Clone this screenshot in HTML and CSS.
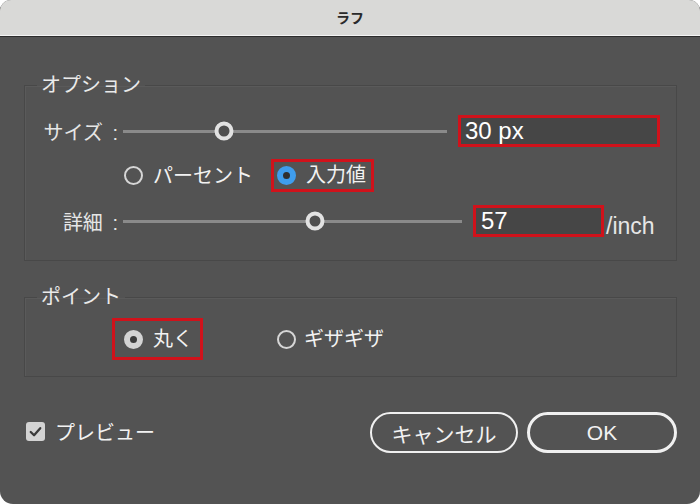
FILE: index.html
```html
<!DOCTYPE html>
<html lang="ja">
<head>
  <meta charset="UTF-8" />
  <meta name="viewport" content="width=device-width, initial-scale=1.0"/>
  <title>ラフ</title>
  <link rel="stylesheet" href="styles.css">
</head>
<body>
  <div class="dialog">
    <div class="titlebar">ラフ</div>

    <div class="panel">
      <fieldset class="group group-options">
        <legend>オプション</legend>

        <div class="slider-row">
          <span class="label">サイズ :</span>
          <div class="track track-size"><span class="thumb" style="left: 31.2%"></span></div>
          <div class="field field-size mark">30 px</div>
        </div>

        <div class="radio-row row-unit">
          <label class="radio"><span class="dot"></span>パーセント</label>
          <label class="radio mark mark-unit"><span class="dot dot-blue"></span>入力値</label>
        </div>

        <div class="slider-row row-detail">
          <span class="label">詳細 :</span>
          <div class="track track-detail"><span class="thumb" style="left: 56.6%"></span></div>
          <div class="field field-detail mark">57</div>
          <span class="unit">/inch</span>
        </div>
      </fieldset>

      <fieldset class="group group-points">
        <legend>ポイント</legend>
        <div class="radio-row row-points">
          <label class="radio mark mark-round"><span class="dot dot-gray"></span>丸く</label>
          <label class="radio radio-jag"><span class="dot"></span>ギザギザ</label>
        </div>
      </fieldset>

      <div class="footer">
        <label class="check">
          <span class="box">
            <svg viewBox="0 0 20 20"><path d="M5 10.5 8.5 14 15 6.5" /></svg>
          </span>
          プレビュー
        </label>
        <div class="buttons">
          <button class="btn">キャンセル</button>
          <button class="btn btn-ok">OK</button>
        </div>
      </div>
    </div>
  </div>
</body>
</html>
```

FILE: styles.css
```css
* {
  box-sizing: border-box;
}
body {
  margin: 0;
  background: #fff;
  font-family: 'Liberation Sans', 'Noto Sans CJK JP', sans-serif;
  color: #f2f2f2;
}
.dialog {
  width: 700px;
  height: 504px;
  background: #535353;
  border-radius: 11px 11px 13px 13px;
  overflow: hidden;
}
.titlebar {
  height: 36px;
  background: #d9d9d7;
  border-bottom: 1px solid #f4f4f4;
  box-shadow: 0 1px 0 #2c2c2c;
  display: flex;
  align-items: center;
  justify-content: center;
  font-size: 14px;
  font-weight: bold;
  color: #2a2a2a;
  padding-bottom: 1px;
}
.panel {
  padding: 0 23px 0 24px;
}
.group {
  margin: 0;
  padding: 0;
  border: 1px solid #484848;
  box-shadow: inset 1px 1px 0 #5a5a5a;
}
.group legend {
  margin-left: 12px;
  padding: 0 4px 0 4px;
  font-size: 20px;
  line-height: 24px;
  color: #eaeaea;
}
.group-options {
  margin-top: 37px;
  padding: 18px 0 23px;
}
.group-points {
  margin-top: 24px;
  padding: 9px 0 16px;
}

/* slider rows */
.slider-row {
  display: flex;
  align-items: center;
  height: 32px;
}
.row-detail {
  margin-top: 13px;
}
.label {
  width: 93px;
  text-align: right;
  font-size: 20px;
  word-spacing: 4px;
  color: #e6e6e6;
  white-space: nowrap;
}
.track {
  position: relative;
  height: 3px;
  margin-left: 5px;
  background: #8a8a8a;
}
.track-size { width: 324px; }
.track-detail { width: 339px; }
.thumb {
  position: absolute;
  top: 50%;
  width: 19px;
  height: 19px;
  border: 4px solid #e2e2e2;
  border-radius: 50%;
  background: #4f4f4f;
  transform: translate(-50%, -50%);
}
.field {
  height: 32px;
  margin-left: 11px;
  background: #464646;
  font-size: 24px;
  line-height: 26px;
  color: #fff;
}
.field-size {
  width: 202px;
  padding-left: 4px;
}
.field-detail {
  width: 131px;
  padding-left: 5px;
}
.unit {
  margin-left: 2px;
  margin-top: 10px;
  font-size: 23px;
  color: #e6e6e6;
}
.mark {
  border: 3px solid #d0121b;
}

/* radios */
.radio-row {
  display: flex;
  align-items: center;
}
.row-unit {
  margin-top: 12px;
  padding-left: 99px;
}
.row-points {
  padding-left: 87px;
}
.radio {
  display: flex;
  align-items: center;
  gap: 10px;
  font-size: 20px;
  line-height: 24px;
  color: #f2f2f2;
}
.mark-unit {
  margin-left: 18px;
  padding: 1px 5px 2px 3px;
}
.mark-round {
  padding: 6px 7px 6px 9px;
}
.radio-jag {
  margin-left: 74px;
  gap: 8px;
}
.dot {
  width: 19px;
  height: 19px;
  border: 2px solid #d6d6d6;
  border-radius: 50%;
  flex-shrink: 0;
}
.dot-blue {
  border: 6px solid #3f9ded;
  background: #2f2f2f;
}
.dot-gray {
  border: 6px solid #d4d4d4;
  background: #3c3c3c;
}

/* footer */
.footer {
  display: flex;
  align-items: center;
  justify-content: space-between;
  margin-top: 35px;
}
.check {
  display: flex;
  align-items: center;
  gap: 10px;
  margin-left: 2px;
  margin-top: -2px;
  font-size: 20px;
  color: #f2f2f2;
}
.box {
  width: 19px;
  height: 19px;
  border-radius: 3px;
  background: #d3d3d3;
}
.box svg {
  width: 19px;
  height: 19px;
  fill: none;
  stroke: #3a3a3a;
  stroke-width: 2.4;
  stroke-linecap: round;
  stroke-linejoin: round;
}
.buttons {
  display: flex;
  gap: 9px;
}
.btn {
  width: 148px;
  height: 41px;
  border: 2px solid #f0f0f0;
  border-radius: 21px;
  background: #535353;
  font-family: 'Liberation Sans', 'Noto Sans CJK JP', sans-serif;
  font-size: 21px;
  color: #f2f2f2;
  padding: 0;
}
.btn-ok {
  width: 150px;
  border-width: 3px;
}
```
